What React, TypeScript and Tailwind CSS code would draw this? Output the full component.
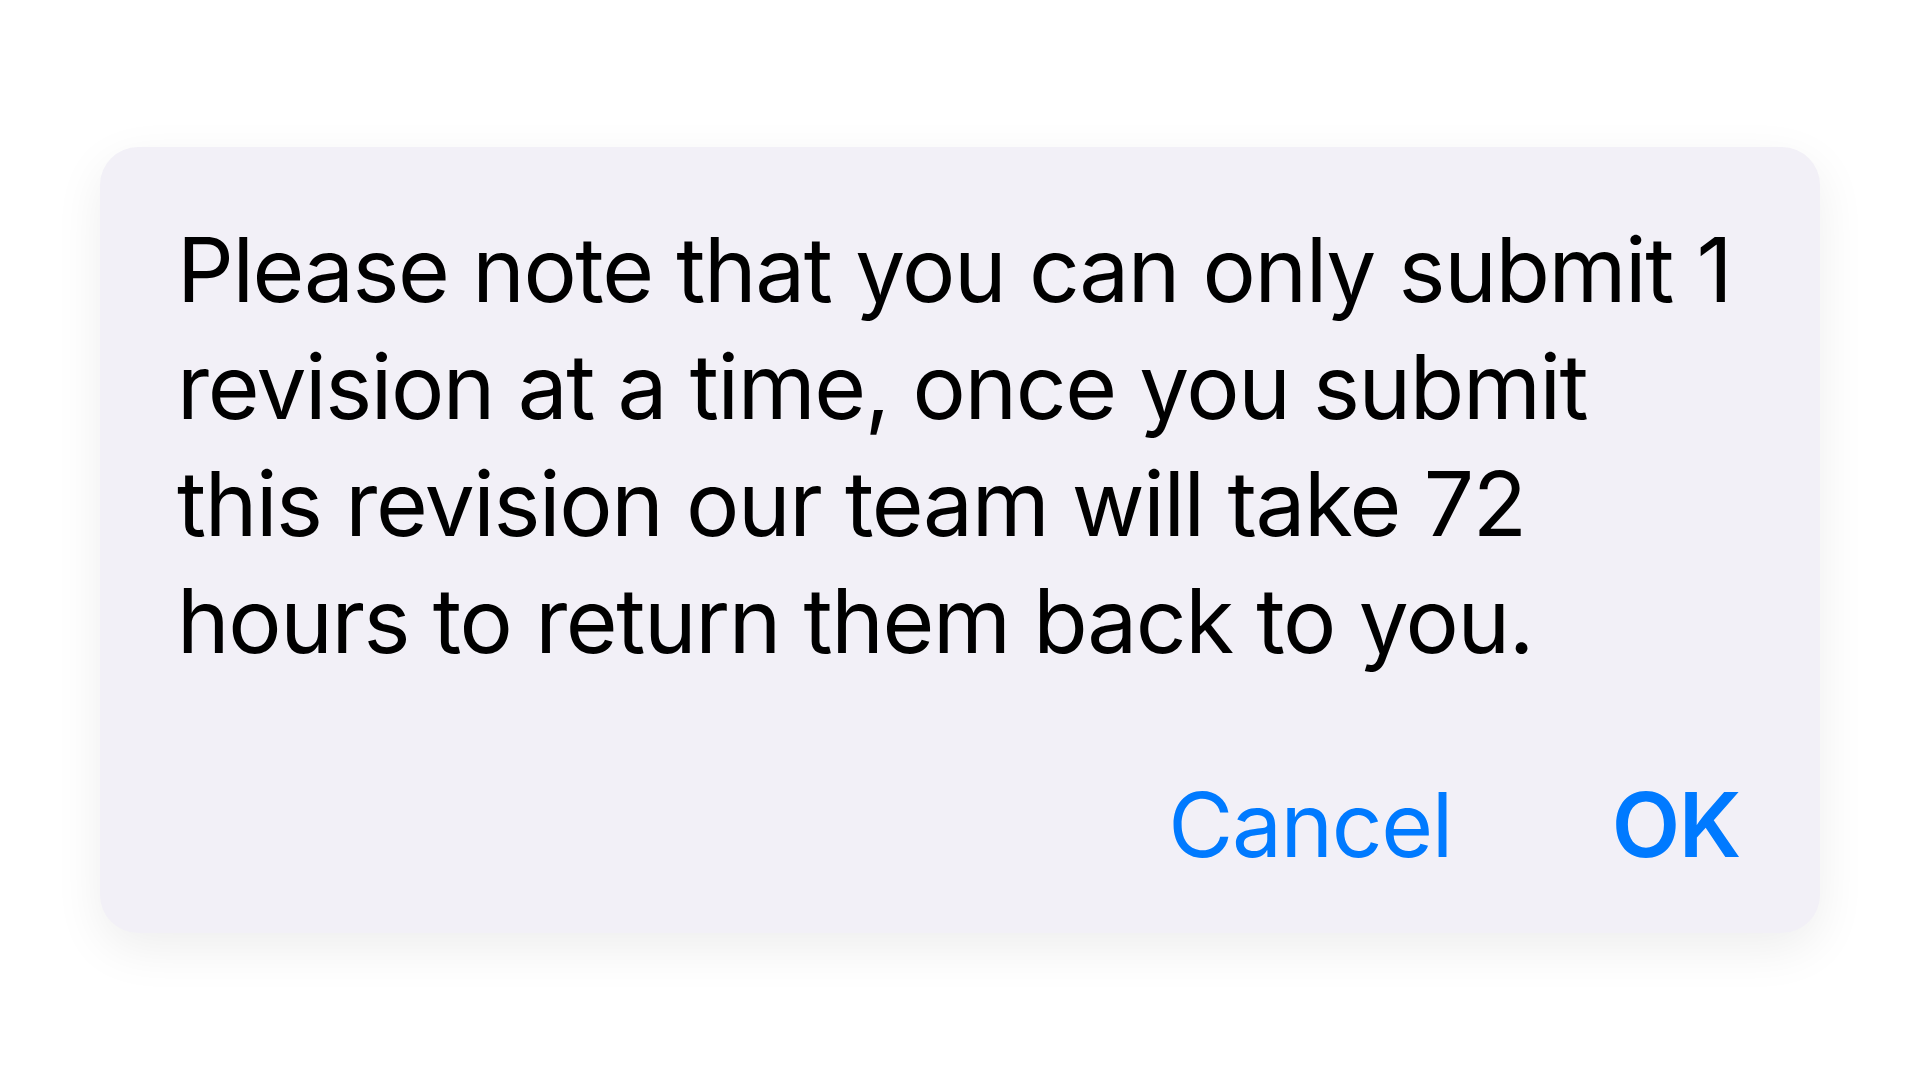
import React from 'react';

const lines = [
  'Please note that you can only submit 1',
  'revision at a time, once you submit',
  'this revision our team will take 72',
  'hours to return them back to you.',
];

export const RevisionAlert = ({ onCancel, onConfirm }: { onCancel?: () => void; onConfirm?: () => void }) => {
  return (
    <div className="w-[1720px] rounded-[38px] bg-[#f2f0f7] shadow-[0_16px_50px_rgba(0,0,0,0.07)] pl-[77px] pr-[80px] pt-[64px] pb-[50px]">
      <p className="text-[89px] leading-[117px] tracking-[-1.4px] whitespace-nowrap text-black">
        {lines.map((line, i) => (
          <React.Fragment key={i}>
            {line}
            {i < lines.length - 1 && <br />}
          </React.Fragment>
        ))}
      </p>
      <div className="flex justify-end items-center mt-[87px] gap-[160px] text-[89px] leading-[117px] tracking-[-1.4px] text-[#007aff]">
        <button className="leading-[117px]" onClick={onCancel}>
          Cancel
        </button>
        <button className="font-semibold leading-[117px]" onClick={onConfirm}>
          OK
        </button>
      </div>
    </div>
  );
};

export default function App() {
  return (
    <div className="w-[1920px] h-[1080px] bg-white flex items-start pl-[100px] pt-[147px] font-['Inter',sans-serif]">
      <RevisionAlert />
    </div>
  );
}
